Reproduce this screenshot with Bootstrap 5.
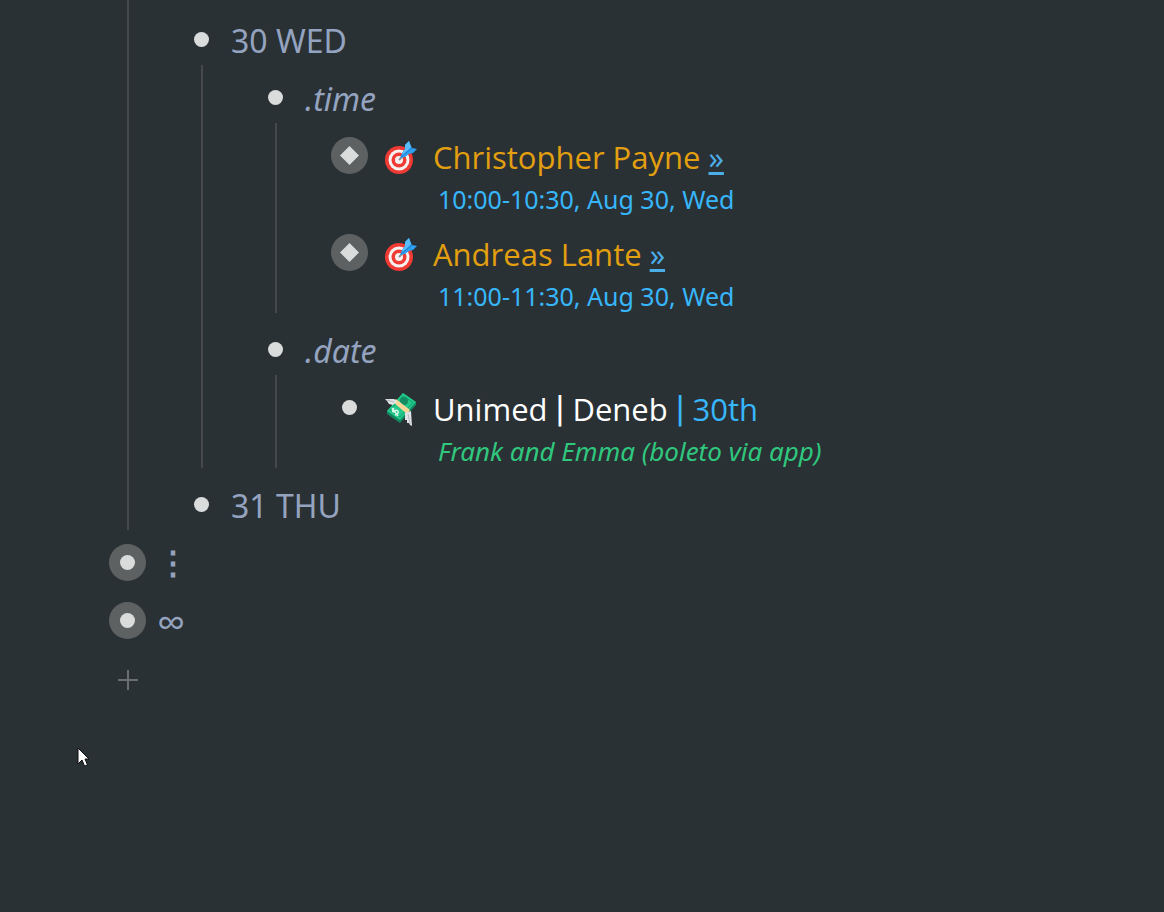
<!DOCTYPE html>
<html lang="en">
<head>
<meta charset="utf-8">
<meta name="viewport" content="width=device-width, initial-scale=1">
<title>Outline</title>
<link href="https://cdn.jsdelivr.net/npm/bootstrap@5.3.0/dist/css/bootstrap.min.css" rel="stylesheet">
<style>
  body { background: #2a3135; color: #94a3bf; font-family: "Noto Sans", "Open Sans", sans-serif; font-size: 32px; line-height: 58px; }
  .outline { padding-left: 109px; }
  .node-row { gap: 11px; }
  .branch { padding-left: 74px; position: relative; }
  .branch::before { content: ""; position: absolute; left: 18px; top: -5px; bottom: 9px; width: 2px; background: #46494c; }
  .branch-top { padding-top: 12px; }
  .branch-top::before { top: 0; bottom: 5px; }
  .bullet { width: 37px; height: 37px; margin-top: 9px; border-radius: 50%; background: none; }
  .bullet-halo { background: #5e6162; }
  .bullet svg, .pic, .pointer svg { display: block; }
  .pic { width: 34px; height: 34px; margin: 12px 14px 0 6px; }
  .two-line { height: 97px; }
  .title { font-family: "Open Sans", "Noto Sans", sans-serif; font-size: 31px; height: 58px; }
  .pipe { font-family: Roboto, sans-serif; font-size: 36px; line-height: 1; }
  .note { font-size: 25px; line-height: 26px; padding-left: 5px; }
  .remark { font-size: 26px; }
  .event { color: #e29f0f; }
  .blue { color: #37b6fb; }
  .green { color: #30c77e; }
  .jump { color: #4caee9; line-height: 1; text-decoration-thickness: 3px; text-underline-offset: 3px; }
  .jump:hover { color: #8accff; }
  .dots { font-family: "Noto Sans CJK JP", sans-serif; font-weight: 700; line-height: 50px; height: 58px; }
  .infinity { font-size: 40px; height: 58px; }
  .add { width: 37px; height: 58px; color: #6a7072; }
  .pointer { left: 77px; top: 747px; pointer-events: none; }
</style>
</head>
<body>
<svg class="d-none" aria-hidden="true">
  <symbol id="dot" viewBox="0 0 37 37"><circle cx="18.5" cy="18.5" r="7.5" fill="#dadcdc"/></symbol>
  <symbol id="diamond" viewBox="0 0 37 37"><path d="M18.5 9l9.5 9.500-9.500 9.500L9 18.500z" fill="#dadcdc"/></symbol>
  <symbol id="target" viewBox="0 0 34 34">
    <circle cx="14" cy="20" r="14" fill="#f03a34"/><circle cx="14" cy="20" r="10.500" fill="#f6f1f0"/>
    <circle cx="14" cy="20" r="7.500" fill="#f03a34"/><circle cx="14" cy="20" r="4" fill="#f6f1f0"/>
    <path d="M14 20l4-4" stroke="#8b8f98" stroke-width="2"/>
    <path d="M15 18l2-5 3-4V5l4-4 2 5 1 2 5 1-4 4-4 1-4 3z" fill="#2f9ff0"/>
    <path d="M17 13l3-4V5l4-4 2 6-8 8z" fill="#59bdfb"/>
    <path d="M16 17L27 8" stroke="#1a7bcf" stroke-width="1"/>
  </symbol>
  <symbol id="money" viewBox="0 0 34 34">
    <path d="M2 19L18 1l13 9v3L15 31 2 22z" fill="#128660"/>
    <path d="M2 19L18 1l13 9-16 18z" fill="#22c98a"/>
    <path d="M5 18.500L18 4l10 6.500L15 25z" fill="none" stroke="#13a472"/>
    <circle cx="19" cy="9" r="4" fill="#138b63"/>
    <path d="M9 16q-3 4 0 4 2-3 4-1 1 3-3 4M7 16l6 8" fill="none" stroke="#d4f7e9" stroke-width="1.500"/>
    <path d="M8 10l3-3 14 11-3 4z" fill="#f8d598"/>
    <path d="M0 7l9 0 3 2-4 4-4-1-2-3z" fill="#e2e3e6"/>
    <path d="M20 21l6-2 1 15-2-1-1-2-2 0v-3l-2 0z" fill="#e2e3e6"/>
    <path d="M2 8l7 2M23 22l2 10" stroke="#b4b8bf"/>
  </symbol>
</svg>

<main class="outline">
  <ul class="list-unstyled m-0">
    <li>
      <ul class="list-unstyled branch branch-top">
        <li>
          <div class="node-row d-flex"><button class="bullet border-0 p-0" aria-label="Open 30 WED"><svg width="37" height="37"><use href="#dot"/></svg></button><div>30 WED</div></div>
          <ul class="list-unstyled branch">
            <li>
              <div class="node-row d-flex"><button class="bullet border-0 p-0" aria-label="Open time"><svg width="37" height="37"><use href="#dot"/></svg></button><div class="fst-italic">.time</div></div>
              <ul class="list-unstyled branch">
                <li class="node-row d-flex two-line">
                  <button class="bullet bullet-halo border-0 p-0" aria-label="Open Christopher Payne"><svg width="37" height="37"><use href="#diamond"/></svg></button>
                  <div class="d-flex"><svg class="pic" aria-hidden="true"><use href="#target"/></svg>
                    <div><div class="title event">Christopher Payne <a class="jump" href="#">»</a></div><div class="note blue">10:00-10:30, Aug 30, Wed</div></div></div>
                </li>
                <li class="node-row d-flex two-line">
                  <button class="bullet bullet-halo border-0 p-0" aria-label="Open Andreas Lante"><svg width="37" height="37"><use href="#diamond"/></svg></button>
                  <div class="d-flex"><svg class="pic" aria-hidden="true"><use href="#target"/></svg>
                    <div><div class="title event">Andreas Lante <a class="jump" href="#">»</a></div><div class="note blue">11:00-11:30, Aug 30, Wed</div></div></div>
                </li>
              </ul>
            </li>
            <li>
              <div class="node-row d-flex"><button class="bullet border-0 p-0" aria-label="Open date"><svg width="37" height="37"><use href="#dot"/></svg></button><div class="fst-italic">.date</div></div>
              <ul class="list-unstyled branch">
                <li class="node-row d-flex two-line">
                  <button class="bullet border-0 p-0" aria-label="Open Unimed"><svg width="37" height="37"><use href="#dot"/></svg></button>
                  <div class="d-flex"><svg class="pic" aria-hidden="true"><use href="#money"/></svg>
                    <div><div class="title text-white">Unimed <span class="pipe">|</span> Deneb <span class="blue"><span class="pipe">|</span> 30th</span></div><div class="note remark green fst-italic">Frank and Emma (boleto via app)</div></div></div>
                </li>
              </ul>
            </li>
          </ul>
        </li>
        <li><div class="node-row d-flex"><button class="bullet border-0 p-0" aria-label="Open 31 THU"><svg width="37" height="37"><use href="#dot"/></svg></button><div>31 THU</div></div></li>
      </ul>
    </li>
    <li class="node-row d-flex"><button class="bullet bullet-halo border-0 p-0" aria-label="Open more"><svg width="37" height="37"><use href="#dot"/></svg></button><div class="dots">⋮</div></li>
    <li class="node-row d-flex"><button class="bullet bullet-halo border-0 p-0" aria-label="Open someday"><svg width="37" height="37"><use href="#dot"/></svg></button><div class="infinity">∞</div></li>
  </ul>
  <button class="add btn p-0 border-0 d-flex align-items-center justify-content-center" aria-label="Add item"><svg width="20" height="20"><path d="M10 0v20M0 10h20" stroke="currentColor" stroke-width="2"/></svg></button>
</main>

<div class="pointer position-absolute" aria-hidden="true"><svg width="14" height="22"><path d="M1 1v16l4-4 2.500 6 3-1-2.500-6h4z" fill="#fff" stroke="#111" stroke-width="1"/></svg></div>
<script src="https://cdn.jsdelivr.net/npm/bootstrap@5.3.0/dist/js/bootstrap.bundle.min.js"></script>
</body>
</html>
